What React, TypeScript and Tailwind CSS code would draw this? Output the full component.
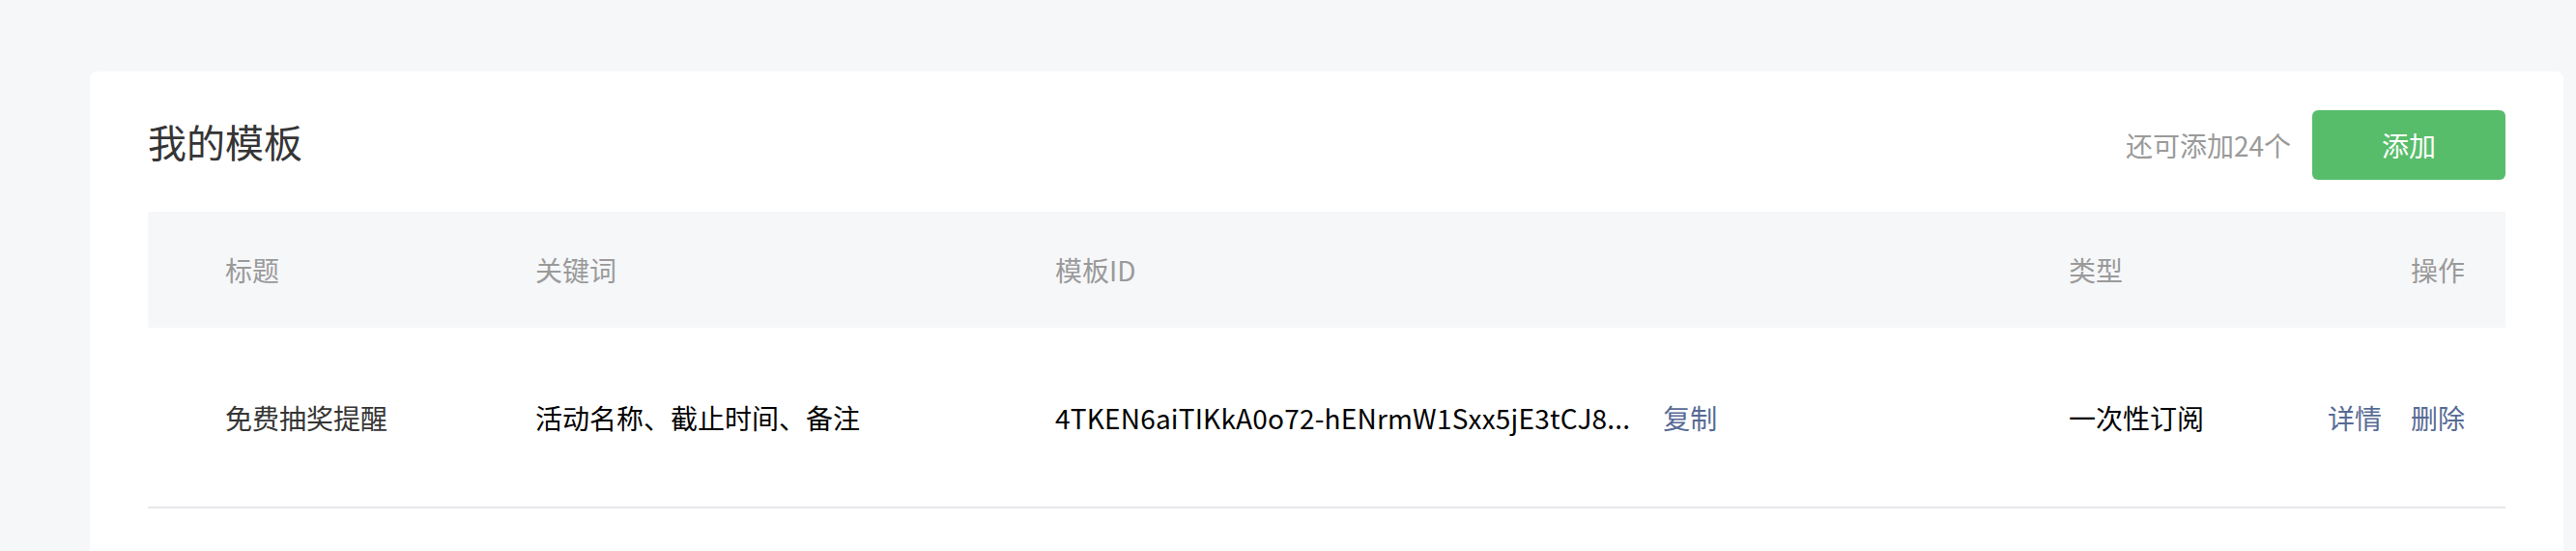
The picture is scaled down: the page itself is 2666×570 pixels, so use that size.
const rows = [
  {
    title: '免费抽奖提醒',
    keywords: '活动名称、截止时间、备注',
    templateId: '4TKEN6aiTIKkA0o72-hENrmW1Sxx5jE3tCJ8...',
    type: '一次性订阅',
  },
];

const cols = 'grid grid-cols-[321px_538px_1fr_200px_210px] items-center pl-[80px] pr-[42px]';

export default function App() {
  return (
    <div
      className="min-h-screen bg-[#f6f7f9] pl-[93px] pr-[13px] pt-[74px]"
      style={{ fontFamily: '"Noto Sans CJK SC", "Noto Sans", sans-serif' }}
    >
      <div className="rounded-t-[8px] bg-white px-[60px] pt-[40px] pb-[60px]">
        {/* Header */}
        <div className="flex h-[72px] items-center justify-between">
          <h2 className="text-[40px] font-normal leading-none text-[#353535] -mt-[8px]">我的模板</h2>
          <div className="flex items-center gap-[22px]">
            <span className="text-[28px] text-[#9a9a9a]">还可添加24个</span>
            <button className="h-[72px] w-[200px] rounded-[6px] bg-[#58bd6a] text-[28px] text-white">
              添加
            </button>
          </div>
        </div>

        {/* Table */}
        <div className="mt-[33px] text-[28px]">
          <div className={`${cols} h-[120px] bg-[#f6f7f9] text-[#9a9a9a]`}>
            <div>标题</div>
            <div>关键词</div>
            <div>模板ID</div>
            <div>类型</div>
            <div className="text-right">操作</div>
          </div>
          {rows.map((row) => (
            <div key={row.templateId} className={`${cols} h-[187px] border-b-2 border-[#e7e7eb]`}>
              <div className="text-[#353535]">{row.title}</div>
              <div className="text-black">{row.keywords}</div>
              <div className="flex items-center gap-[34px]">
                <span className="tracking-[0.2px] text-black">{row.templateId}</span>
                <a className="text-[#576b95] cursor-pointer">复制</a>
              </div>
              <div className="text-black">{row.type}</div>
              <div className="flex justify-end gap-[30px] text-[#576b95]">
                <a className="cursor-pointer">详情</a>
                <a className="cursor-pointer">删除</a>
              </div>
            </div>
          ))}
        </div>
      </div>
    </div>
  );
}
